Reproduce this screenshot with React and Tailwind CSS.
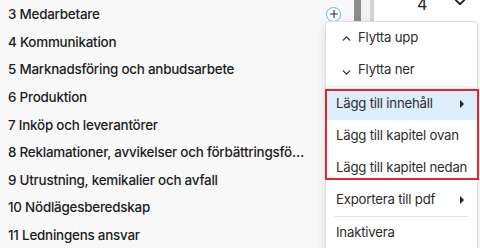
import { ChevronUp, ChevronDown, Plus } from "lucide-react";

const chapters = [
  "3 Medarbetare",
  "4 Kommunikation",
  "5 Marknadsföring och anbudsarbete",
  "6 Produktion",
  "7 Inköp och leverantörer",
  "8 Reklamationer, avvikelser och förbättringsförslag",
  "9 Utrustning, kemikalier och avfall",
  "10 Nödlägesberedskap",
  "11 Ledningens ansvar",
];

function MenuItem({ icon, label, arrow, active }) {
  return (
    <div
      className={`h-8 flex items-center pr-3 ${icon ? "pl-[14px]" : "pl-[10px]"} ${
        active ? "bg-[#dcedfb]" : ""
      }`}
    >
      {icon && <span className="w-[14px] mr-[4px] flex items-center">{icon}</span>}
      <span className="flex-1 whitespace-nowrap">{label}</span>
      {arrow && (
        <span className="w-0 h-0 border-y-[4px] border-y-transparent border-l-[4px] border-l-[#222] mr-[1px]" />
      )}
    </div>
  );
}

export default function App() {
  return (
    <div
      className="relative w-[480px] h-[248px] overflow-hidden flex bg-white"
      style={{ fontFamily: "Inter, 'Noto Sans', sans-serif" }}
    >
      <div className="w-[354px] bg-[#f8f8f8] flex flex-col pl-2 pr-3 pt-[0.2px]">
        {chapters.map((c, i) => (
          <div key={c} className="h-[27.65px] flex items-center gap-[18px] shrink-0">
            <span className="flex-1 truncate text-[13.4px] font-medium text-[#1c1c1c] tracking-[-0.22px]">
              {c}
            </span>
            <span
              className={`w-[15px] h-[15px] rounded-full border border-[#6aaef2] flex items-center justify-center bg-white mr-[1px] ${
                i === 0 ? "" : "invisible"
              }`}
            >
              <Plus size={12} strokeWidth={2.2} className="text-[#2a2a2a]" />
            </span>
          </div>
        ))}
      </div>
      <div className="w-[7px] bg-[#8c8c8c]" />
      <div className="w-[9px] bg-[#f3f3f3]" />
      <div className="w-[4px] bg-[#d4d4d4]" />
      <div className="flex-1 bg-white relative">
        <div className="flex items-start gap-[24px] pl-[43px] -mt-[8px] text-[16px] text-[#222]">
          <span>4</span>
          <ChevronDown size={18} strokeWidth={2.4} className="mt-[1px]" />
        </div>
      </div>

      <div className="absolute left-[325px] top-[21px] w-[153px] h-[240px] bg-white border border-[#dedede] rounded-[4px] shadow-[0_2px_8px_rgba(0,0,0,0.12)] text-[13.2px] text-[#2b2b2b] tracking-[-0.2px]">
        <MenuItem icon={<ChevronUp size={13} strokeWidth={2.4} />} label="Flytta upp" />
        <MenuItem
          icon={<ChevronDown size={13} strokeWidth={2.4} className="mt-[4px]" />}
          label="Flytta ner"
        />
        <div className="h-[2px] border-t border-[#ececec]" />
        <MenuItem label="Lägg till innehåll" arrow active />
        <MenuItem label="Lägg till kapitel ovan" />
        <MenuItem label="Lägg till kapitel nedan" />
        <MenuItem label="Exportera till pdf" arrow />
        <div className="mx-2 border-t border-[#e4e4e4]" />
        <MenuItem label="Inaktivera" />
      </div>

      <div className="absolute left-[325px] top-[89px] w-[154px] h-[91px] border-2 border-[#e3262b]" />
    </div>
  );
}
